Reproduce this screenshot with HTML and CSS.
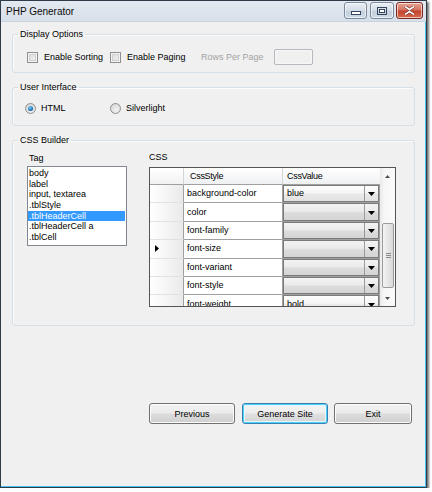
FILE: index.html
```html
<!DOCTYPE html>
<html>
<head>
<meta charset="utf-8">
<title>PHP Generator</title>
<link rel="stylesheet" href="styles.css">
</head>
<body>
<div class="window">
  <div class="titlebar">
    <span class="title">PHP Generator</span>
    <div class="caption-btns">
      <div class="cbtn cbtn-min"><svg width="10" height="4" viewBox="0 0 10 4"><rect x="0.5" y="0.5" width="9" height="3" fill="#fff" stroke="#34475e"/></svg></div>
      <div class="cbtn cbtn-max"><svg width="10" height="8" viewBox="0 0 10 8"><rect x="0.5" y="0.5" width="9" height="7" fill="none" stroke="#34475e"/><rect x="2.5" y="2.5" width="5" height="3" fill="#fff" stroke="#34475e"/></svg></div>
      <div class="cbtn cbtn-close"><svg width="11" height="9" viewBox="0 0 11 9"><path d="M1 0.5 L5.5 3.5 L10 0.5 M1 8.5 L5.5 5.5 L10 8.5" fill="none" stroke="#4a1510" stroke-width="2.6"/><path d="M1 0.5 L5.5 3.5 L10 0.5 M1 8.5 L5.5 5.5 L10 8.5" fill="none" stroke="#fff" stroke-width="1.6"/></svg></div>
    </div>
  </div>
  <div class="client">
    <fieldset class="group group-display">
      <legend>Display Options</legend>
      <div class="opt-row">
        <label class="check w-sort"><span class="box"></span>Enable Sorting</label>
        <label class="check w-page"><span class="box"></span>Enable Paging</label>
        <span class="disabled w-rows">Rows Per Page</span>
        <span class="textbox"></span>
      </div>
    </fieldset>

    <fieldset class="group group-ui">
      <legend>User Interface</legend>
      <div class="opt-row ui-row">
        <label class="radio w-html"><span class="circle on"></span>HTML</label>
        <label class="radio"><span class="circle"></span>Silverlight</label>
      </div>
    </fieldset>

    <fieldset class="group group-css">
      <legend>CSS Builder</legend>
      <div class="builder">
        <div class="tag-col">
          <div class="caption tag-caption">Tag</div>
          <div class="listbox">
            <div class="item">body</div>
            <div class="item">label</div>
            <div class="item">input, textarea</div>
            <div class="item">.tblStyle</div>
            <div class="item selected">.tblHeaderCell</div>
            <div class="item">.tblHeaderCell a</div>
            <div class="item">.tblCell</div>
          </div>
        </div>
        <div class="css-col">
          <div class="caption">CSS</div>
          <div class="grid">
            <div class="grid-main">
              <div class="grow ghead">
                <div class="rh"></div>
                <div class="hc c1">CssStyle</div>
                <div class="hc c2">CssValue</div>
              </div>
              <div class="grow">
                <div class="rh"></div>
                <div class="cell c1">background-color</div>
                <div class="cell c2"><div class="combo light"><span class="combo-text">blue</span><span class="combo-btn"><svg width="7" height="4" viewBox="0 0 7 4"><path d="M0 0H7L3.5 4Z" fill="#000"/></svg></span></div></div>
              </div>
              <div class="grow">
                <div class="rh"></div>
                <div class="cell c1">color</div>
                <div class="cell c2"><div class="combo"><span class="combo-text"></span><span class="combo-btn"><svg width="7" height="4" viewBox="0 0 7 4"><path d="M0 0H7L3.5 4Z" fill="#000"/></svg></span></div></div>
              </div>
              <div class="grow">
                <div class="rh"></div>
                <div class="cell c1">font-family</div>
                <div class="cell c2"><div class="combo"><span class="combo-text"></span><span class="combo-btn"><svg width="7" height="4" viewBox="0 0 7 4"><path d="M0 0H7L3.5 4Z" fill="#000"/></svg></span></div></div>
              </div>
              <div class="grow">
                <div class="rh"><svg class="cur" width="4" height="7" viewBox="0 0 4 7"><path d="M0 0L4 3.5L0 7Z" fill="#000"/></svg></div>
                <div class="cell c1">font-size</div>
                <div class="cell c2"><div class="combo"><span class="combo-text"></span><span class="combo-btn"><svg width="7" height="4" viewBox="0 0 7 4"><path d="M0 0H7L3.5 4Z" fill="#000"/></svg></span></div></div>
              </div>
              <div class="grow">
                <div class="rh"></div>
                <div class="cell c1">font-variant</div>
                <div class="cell c2"><div class="combo"><span class="combo-text"></span><span class="combo-btn"><svg width="7" height="4" viewBox="0 0 7 4"><path d="M0 0H7L3.5 4Z" fill="#000"/></svg></span></div></div>
              </div>
              <div class="grow">
                <div class="rh"></div>
                <div class="cell c1">font-style</div>
                <div class="cell c2"><div class="combo"><span class="combo-text"></span><span class="combo-btn"><svg width="7" height="4" viewBox="0 0 7 4"><path d="M0 0H7L3.5 4Z" fill="#000"/></svg></span></div></div>
              </div>
              <div class="grow">
                <div class="rh"></div>
                <div class="cell c1">font-weight</div>
                <div class="cell c2"><div class="combo light"><span class="combo-text">bold</span><span class="combo-btn"><svg width="7" height="4" viewBox="0 0 7 4"><path d="M0 0H7L3.5 4Z" fill="#000"/></svg></span></div></div>
              </div>
            </div>
            <div class="vscroll">
              <div class="sarrow"><svg width="5" height="3" viewBox="0 0 5 3"><path d="M0 3L2.5 0L5 3Z" fill="#4d4d4d"/></svg></div>
              <div class="strack">
                <div class="thumb"><svg width="5" height="5" viewBox="0 0 5 5"><path d="M0 0.5H5M0 2.5H5M0 4.5H5" stroke="#8a8a8a" stroke-width="1"/></svg></div>
              </div>
              <div class="sarrow"><svg width="5" height="3" viewBox="0 0 5 3"><path d="M0 0L2.5 3L5 0Z" fill="#4d4d4d"/></svg></div>
            </div>
          </div>
        </div>
      </div>
    </fieldset>

    <div class="buttons">
      <button class="btn b-prev">Previous</button>
      <button class="btn b-gen focused">Generate Site</button>
      <button class="btn b-exit">Exit</button>
    </div>
  </div>
</div>
</body>
</html>
```
FILE: styles.css
```css
* { box-sizing: border-box; }

html, body {
  margin: 0;
  padding: 0;
  background: #ffffff;
}

body {
  font-family: "Liberation Sans", Arial, sans-serif;
  font-size: 9px;
  line-height: 11px;
  color: #000;
}

.window {
  width: 427px;
  height: 488px;
  border: 1px solid #2f3b48;
  display: flex;
  flex-direction: column;
  background: #f0f0f0;
  box-shadow: 2px 2px 2px rgba(0, 0, 0, 0.55);
}

.titlebar {
  height: 21px;
  flex: none;
  display: flex;
  align-items: flex-start;
  justify-content: space-between;
  background: linear-gradient(#e3e9f0, #d7e0ea);
  border-bottom: 1px solid #c9d3de;
  padding-left: 5px;
}

.title {
  font-size: 10px;
  line-height: 12px;
  margin-top: 5px;
  color: #0c0c0c;
}

.caption-btns {
  display: flex;
  margin-top: 1px;
  margin-right: 3px;
}

.cbtn {
  height: 17px;
  border: 1px solid #7b8a9c;
  border-radius: 3px;
  display: flex;
  align-items: center;
  justify-content: center;
  box-shadow: inset 0 0 0 1px rgba(255, 255, 255, 0.6);
}

.cbtn-min {
  width: 23px;
  margin-right: 3px;
  background: linear-gradient(#e9eef4 0%, #d4dde7 50%, #c3cfdc 51%, #cfdae6 100%);
  padding-top: 5px;
}

.cbtn-max {
  width: 24px;
  margin-right: 2px;
  background: linear-gradient(#e9eef4 0%, #d4dde7 50%, #c3cfdc 51%, #cfdae6 100%);
}

.cbtn-close {
  width: 27px;
  border-color: #7a2a22;
  background: linear-gradient(#e7a597 0%, #d5705d 48%, #c2422c 52%, #d46b4f 100%);
}

.client {
  flex: 1;
  border-right: 1px solid #47c2ee;
  border-bottom: 1px solid #47c2ee;
  display: flex;
  flex-direction: column;
}

/* group boxes */
.group {
  margin: 0 10px 0 11px;
  padding: 0;
  border: 1px solid #d5dfe5;
  border-radius: 3px;
  box-shadow: inset 1px 1px 0 #fcfcfc;
  min-width: 0;
}

.group legend {
  margin-left: 5px;
  padding: 0 2px;
  font-size: 9px;
  line-height: 11px;
}

.group-display { margin-top: 7px; }
.group-ui { margin-top: 9px; }
.group-css { margin-top: 9px; }

.opt-row {
  display: flex;
  align-items: center;
  height: 16px;
  margin: 9px 0 7px 14px;
}

.ui-row {
  margin: 7px 0 9px 12px;
}

.check, .radio {
  display: flex;
  align-items: center;
}

.w-sort { width: 83px; }
.w-page { width: 91px; }
.w-rows { width: 73px; }
.w-html { width: 85px; }

.box {
  width: 11px;
  height: 11px;
  border: 1px solid #8e8f8f;
  background: linear-gradient(135deg, #d8d8d8, #f6f6f6);
  box-shadow: inset 0 0 0 1px #f4f4f4, inset 0 0 0 2px #cfcfcf;
  margin-right: 6px;
}

.circle {
  width: 11px;
  height: 11px;
  border-radius: 50%;
  border: 1px solid #8e8f8f;
  background: radial-gradient(circle at 60% 65%, #f4f4f4, #cfcfcf);
  margin-right: 5px;
  display: flex;
  align-items: center;
  justify-content: center;
}

.circle.on::after {
  content: "";
  width: 5px;
  height: 5px;
  border-radius: 50%;
  background: radial-gradient(circle at 40% 35%, #7fd0ff, #0f5fa8 70%, #0a3f75);
}

.disabled { color: #a3a3a3; }

.textbox {
  width: 39px;
  height: 16px;
  border: 1px solid #b5b9bf;
  border-radius: 2px;
  background: #f0f0f0;
  box-shadow: inset 0 0 0 1px #f7f7f7;
}

/* CSS builder */
.builder {
  display: flex;
  align-items: flex-start;
  margin: 6px 0 18px 14px;
}

.tag-col {
  width: 100px;
  padding-top: 1px;
}

.tag-caption { margin-left: 2px; }

.caption {
  line-height: 11px;
}

.listbox {
  margin-top: 2px;
  width: 100px;
  height: 80px;
  border: 1px solid #828790;
  background: #fff;
  padding: 1px 1px 0 0;
}

.item {
  height: 10.7px;
  line-height: 11px;
  padding-left: 1px;
  white-space: nowrap;
}

.item.selected {
  background: #3399ff;
  color: #fff;
}

.css-col {
  margin-left: 22px;
}

.grid {
  margin-top: 4px;
  width: 247px;
  height: 140px;
  border: 1px solid #555;
  display: flex;
  background: #fff;
}

.grid-main {
  width: 230px;
  height: 138px;
  overflow: hidden;
}

.grow {
  display: flex;
  height: 18.4px;
}

.grow.ghead {
  height: 17px;
}

.rh {
  width: 34px;
  flex: none;
  border-right: 1px solid #a0a0a0;
  border-bottom: 1px solid #e2e2e2;
  background: linear-gradient(90deg, #ffffff, #f3f3f3 60%, #e9e9e9);
  display: flex;
  align-items: center;
  padding-left: 5px;
}

.ghead .rh {
  border-right: 1px solid #d5d5d5;
  border-bottom: 1px solid #a0a0a0;
  background: linear-gradient(#ffffff, #f1f1f1);
}

.hc {
  background: linear-gradient(#ffffff 0%, #f7f8fa 50%, #eef0f2 100%);
  border-right: 1px solid #d5d5d5;
  border-bottom: 1px solid #a0a0a0;
  padding-left: 6px;
  display: flex;
  align-items: center;
  letter-spacing: -0.3px;
}

.c1 { width: 99px; flex: none; }
.c2 { width: 97px; flex: none; }

.hc.c2 { padding-left: 4px; border-right: none; width: 97px; }

.cell {
  border-right: 1px solid #a0a0a0;
  border-bottom: 1px solid #a0a0a0;
  display: flex;
  align-items: center;
  padding-left: 3px;
  white-space: nowrap;
  overflow: hidden;
}

.cell.c2 {
  padding: 0;
  align-items: stretch;
}

.combo {
  flex: 1;
  display: flex;
  border: 1px solid #7a7a7a;
  background: linear-gradient(#f3f3f3 0%, #ebebeb 45%, #dcdcdc 55%, #d4d4d4 100%);
}

.combo.light {
  background: linear-gradient(#fdfdfd 0%, #f5f5f5 45%, #e8e8e8 55%, #e2e2e2 100%);
}

.combo-text {
  flex: 1;
  padding-left: 3px;
  display: flex;
  align-items: center;
}

.combo-btn {
  width: 14px;
  border-left: 1px solid #9a9a9a;
  display: flex;
  align-items: center;
  justify-content: center;
  padding-top: 1px;
}

/* scrollbar */
.vscroll {
  width: 15px;
  height: 138px;
  display: flex;
  flex-direction: column;
  background: linear-gradient(90deg, #e9e9e9, #f7f7f7 30%, #f9f9f9);
}

.sarrow {
  height: 16px;
  display: flex;
  align-items: center;
  justify-content: center;
}

.strack {
  flex: 1;
  padding-top: 39px;
}

.thumb {
  height: 65px;
  margin: 0 1px 0 2px;
  border: 1px solid #9b9b9b;
  border-radius: 2px;
  background: linear-gradient(90deg, #f3f3f3, #e6e6e6 50%, #d9d9d9);
  display: flex;
  align-items: center;
  justify-content: center;
}

/* buttons */
.buttons {
  display: flex;
  margin-top: 77px;
  padding-left: 148px;
}

.btn {
  height: 21px;
  font-family: "Liberation Sans", Arial, sans-serif;
  font-size: 9px;
  color: #000;
  border: 1px solid #707070;
  border-radius: 3px;
  padding: 0;
  background: linear-gradient(#f2f2f2 0%, #ebebeb 49%, #dddddd 51%, #cfcfcf 100%);
  box-shadow: inset 0 0 0 1px #fcfcfc;
}

.b-prev { width: 86px; margin-right: 7px; }
.b-gen { width: 86px; margin-right: 6px; }
.b-exit { width: 78px; }

.btn.focused {
  border-color: #3c7fb1;
  box-shadow: inset 0 0 0 1px #48d0f8, inset 0 0 0 2px #e6f6fc;
  background: linear-gradient(#f4f4f4 0%, #ededed 49%, #e0e0e0 51%, #d3d3d3 100%);
}
```
